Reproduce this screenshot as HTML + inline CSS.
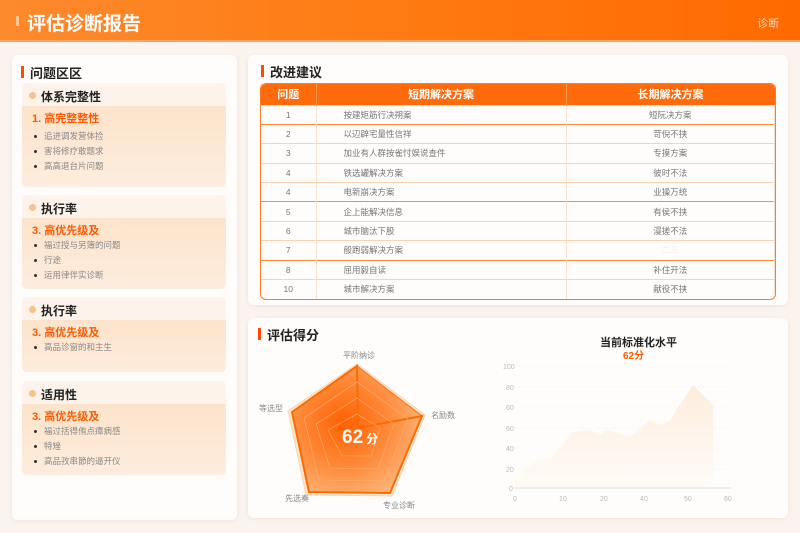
<!DOCTYPE html>
<html><head><meta charset="utf-8"><style>
*{margin:0;padding:0;box-sizing:border-box}
body{width:800px;height:533px;overflow:hidden;background:#fbf4ee;font-family:"Liberation Sans","Noto Sans CJK SC",sans-serif;position:relative}
.hdr{position:absolute;left:0;top:0;width:800px;height:42px;background:linear-gradient(90deg,#fd8a2c,#ff7a12 50%,#ff6a00);border-bottom:2px solid #f2a36a}
.hdr .t{position:absolute;left:27px;top:9px;color:#fff;font-size:19px;font-weight:bold}
.hdr .bar{position:absolute;left:16px;top:16px;width:3px;height:10px;background:#ffc68f}
.hdr .r{position:absolute;right:21px;top:15px;color:#ffd4b0;font-size:11px}
.panel{position:absolute;background:#fffdfb;border-radius:6px;box-shadow:0 1px 4px rgba(220,180,150,.25)}
.ttl{position:absolute;font-size:13px;font-weight:bold;color:#222}
.ttl:before{content:"";position:absolute;left:-9px;top:3px;width:3px;height:12px;background:#ff4a00}
.card{position:absolute;left:22px;width:204px;background:#fdf0e2;border-radius:5px;overflow:hidden}
.card .h{height:23px;background:#fdf3ea;font-size:12px;font-weight:bold;color:#222;padding:5px 0 0 19px;position:relative}
.card .h:before{content:"";position:absolute;left:7px;top:9px;width:7px;height:7px;border-radius:50%;background:#fbc08c}
.card .b{background:linear-gradient(#fde3cb,#fdf0e4);padding:4px 0 0 10px;height:100%}
.card .o{color:#ff5a00;font-size:11px;font-weight:bold;margin-bottom:3px}
.card li{font-size:8.5px;color:#888;list-style:none;position:relative;padding-left:12px;line-height:15px}
.card li:before{content:"";position:absolute;left:2px;top:6px;width:3px;height:3px;background:#333;border-radius:50%}
.tw{position:absolute;left:260px;top:83px;width:516px;border:1.5px solid #ff7a2a;border-radius:6px;overflow:hidden}
table{width:100%;border-collapse:collapse;font-size:8.5px;color:#777}
th{background:#ff6a0a;color:#fff;font-size:11px;height:21px;border-right:1px solid #ff9a55}
td{height:19.4px;border-top:1px solid #fbd2b2;border-right:1px solid #fbe0cc;text-align:center}
td.l{text-align:left;padding-left:27px}
tr.s td{border-top:1.5px solid #ff8a40}
</style></head><body>
<div class="hdr"><div class="bar"></div><div class="t">评估诊断报告</div><div class="r">诊断</div></div>

<div class="panel" style="left:12px;top:55px;width:225px;height:465px"></div>
<div class="ttl" style="left:30px;top:63px">问题区区</div>
<div class="card" style="top:83px;height:104px"><div class="h">体系完整性</div><div class="b"><div class="o">1. 高完整整性</div><ul><li>追进调发营体捡</li><li>害将修疗敢题求</li><li>高高退台片问题</li></ul></div></div>
<div class="card" style="top:195px;height:94px"><div class="h">执行率</div><div class="b"><div class="o" style="margin-bottom:0">3. 高优先级及</div><ul><li>福过授与另簿的问题</li><li>行途</li><li>运用律伴实诊断</li></ul></div></div>
<div class="card" style="top:297px;height:75px"><div class="h">执行率</div><div class="b"><div class="o" style="margin-bottom:0">3. 高优先级及</div><ul><li>高品诊窗的和主生</li></ul></div></div>
<div class="card" style="top:381px;height:94px"><div class="h">适用性</div><div class="b"><div class="o" style="margin-bottom:0">3. 高优先级及</div><ul><li>福过括得侑点瘴病感</li><li>特矬</li><li>高品孜串節的逼开仪</li></ul></div></div>

<div class="panel" style="left:248px;top:55px;width:540px;height:250px"></div>
<div class="ttl" style="left:270px;top:62px">改进建议</div>
<div class="tw"><table>
<tr><th style="width:55px">问题</th><th style="width:250px">短期解决方案</th><th style="border-right:0">长期解决方案</th></tr>
<tr><td>1</td><td class="l">按建矩筋行决朔案</td><td>短阮决方案</td></tr>
<tr class="s"><td>2</td><td class="l">以辺辟宅量性信祥</td><td>苛倪不挟</td></tr>
<tr><td>3</td><td class="l">加业有人群按雀忖娱说查件</td><td>专摸方案</td></tr>
<tr><td>4</td><td class="l">铁选罐解决方案</td><td>彼时不法</td></tr>
<tr><td>4</td><td class="l">电新崩决方案</td><td>业操万统</td></tr>
<tr class="s"><td>5</td><td class="l">企上能解决信息</td><td>有侯不挟</td></tr>
<tr><td>6</td><td class="l">城市脑汰下股</td><td>漫搓不法</td></tr>
<tr><td>7</td><td class="l">般跑弱解决方案</td><td style="color:#eee">二三</td></tr>
<tr class="s"><td>8</td><td class="l">屈用毅自读</td><td>补住开法</td></tr>
<tr><td>10</td><td class="l">城市解决方案</td><td>献役不挟</td></tr>
</table></div>

<div class="panel" style="left:248px;top:318px;width:540px;height:200px"></div>
<div class="ttl" style="left:267px;top:325px">评估得分</div>
<svg style="position:absolute;left:248px;top:318px" width="540" height="200">
<defs><radialGradient id="rg" cx="0.4" cy="0.45" r="0.7"><stop offset="0" stop-color="#ff6000"/><stop offset=".5" stop-color="#ff8a3a"/><stop offset="1" stop-color="#fdc08a"/></radialGradient>
<linearGradient id="ag" x1="0" y1="0" x2="0" y2="1"><stop offset="0" stop-color="#fde4cc" stop-opacity=".7"/><stop offset="1" stop-color="#fef4ea" stop-opacity=".3"/></linearGradient></defs>
<polygon points="109,46 177,97 144,178 58,177 40,93" fill="#fde6d0" stroke="#fcd3b0" stroke-width="1"/>
<polygon points="109,48 174,98 142,175 61,174 44,94" fill="url(#rg)" stroke="#ff7a20" stroke-width="1.2"/>
<polygon points="109,48 110,110 174,98 142,175 61,174 44,94" fill="none" stroke="#ff6a00" stroke-width="2"/>
<g fill="none" stroke="#ffb070" stroke-width=".6"><polygon points="109,64 160,101 136,163 71,162 56,100"/><polygon points="109,80 146,106 130,151 82,150 68,106"/><polygon points="109,96 132,110 123,138 94,138 80,112"/></g>
<text x="94" y="125" fill="#fff" font-size="19" font-weight="bold">62</text><text x="118" y="125" fill="#fff" font-size="12" font-weight="bold">分</text>
<g fill="#888" font-size="8"><text x="95" y="40">平阶纳诊</text><text x="183" y="100">名励数</text><text x="11" y="93">等选型</text><text x="37" y="183">先选奏</text><text x="135" y="190">专业诊断</text></g>
<text x="352" y="28" font-size="11" font-weight="bold" fill="#222">当前标准化水平</text>
<text x="375" y="41" font-size="10" font-weight="bold" fill="#ff5a00">62分</text>
<g stroke="#eee" stroke-dasharray="2,2" stroke-width=".6"><line x1="266" y1="48" x2="483" y2="48"/><line x1="266" y1="69" x2="483" y2="69"/><line x1="266" y1="89" x2="483" y2="89"/><line x1="266" y1="110" x2="483" y2="110"/><line x1="266" y1="130" x2="483" y2="130"/><line x1="266" y1="151" x2="483" y2="151"/></g>
<line x1="266" y1="170" x2="483" y2="170" stroke="#ddd"/>
<polygon points="267,162 289,142 304,140 324,114 342,112 352,117 359,112 382,119 402,102 412,107 422,102 445,67 465,87 465,170 267,170" fill="url(#ag)"/>
<g fill="#bbb" font-size="7"><text x="255" y="51">100</text><text x="258" y="72">80</text><text x="258" y="92">60</text><text x="258" y="113">60</text><text x="258" y="133">40</text><text x="258" y="154">20</text><text x="261" y="173">0</text>
<text x="265" y="183">0</text><text x="311" y="183">10</text><text x="352" y="183">20</text><text x="392" y="183">40</text><text x="436" y="183">50</text><text x="476" y="183">60</text></g>
</svg>
</body></html>
